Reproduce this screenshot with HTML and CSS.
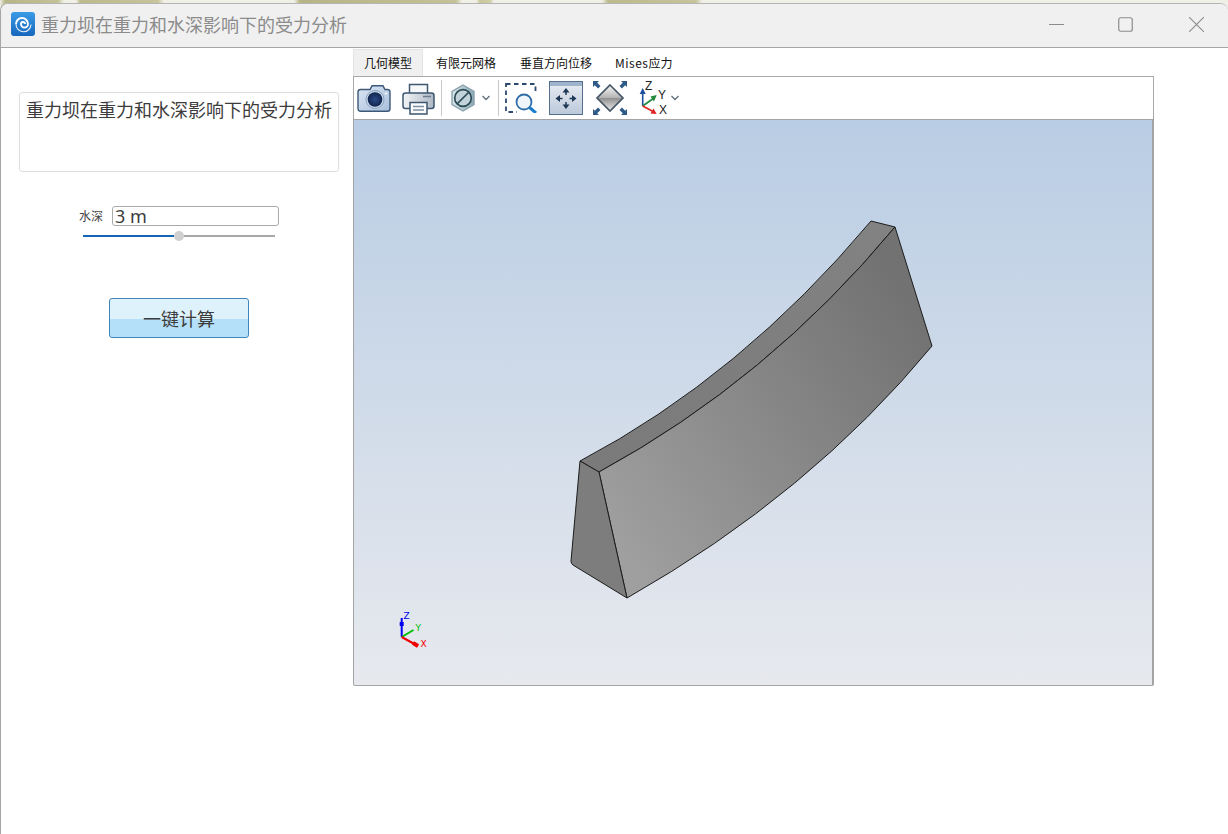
FILE: index.html
```html
<!DOCTYPE html>
<html lang="zh">
<head>
<meta charset="utf-8">
<title>重力坝在重力和水深影响下的受力分析</title>
<link rel="stylesheet" href="styles.css">
</head>
<body>
<div class="window">
  <header class="titlebar">
    <svg class="app-icon" viewBox="0 0 24 24">
      <defs><linearGradient id="ai" x1="0" y1="0" x2="0" y2="1"><stop offset="0" stop-color="#3a9be6"/><stop offset="1" stop-color="#1766bd"/></linearGradient></defs>
      <rect width="24" height="24" rx="3" fill="url(#ai)"/>
      <path d="M14 12A2 2 0 0 0 10 12A3.500 3.500 0 0 0 17 12A6 6 0 0 0 5 12" stroke="#fff" stroke-width="1.900" fill="none"/>
      <path d="M5 12A7.500 7.500 0 0 0 20 12.500" stroke="#fff" stroke-width="1.100" fill="none" opacity=".9"/>
    </svg>
    <span class="window-title">重力坝在重力和水深影响下的受力分析</span>
    <div class="controls">
      <svg class="ctl ctl-min" viewBox="0 0 15 15"><path d="M0 7.500H15" stroke="#8c8c8c" stroke-width="1" fill="none"/></svg>
      <svg class="ctl ctl-max" viewBox="0 0 15 15"><rect x=".75" y=".75" width="13.500" height="13.500" rx="2" stroke="#8c8c8c" stroke-width="1.200" fill="none"/></svg>
      <svg class="ctl ctl-close" viewBox="0 0 15 15"><path d="M0 0L15 15M15 0L0 15" stroke="#8c8c8c" stroke-width="1.100" fill="none"/></svg>
    </div>
  </header>
  <main class="content">
    <aside class="side">
      <div class="heading-box">重力坝在重力和水深影响下的受力分析</div>
      <div class="field">
        <span class="field-label">水深</span>
        <div class="field-input">3 m</div>
      </div>
      <div class="slider">
        <div class="slider-fill"></div>
        <div class="slider-thumb"></div>
        <div class="slider-rest"></div>
      </div>
      <div class="calc-btn"><span>一键计算</span></div>
    </aside>
    <section class="viewer">
      <nav class="tabs">
        <span class="tab tab-active">几何模型</span>
        <span class="tab">有限元网格</span>
        <span class="tab">垂直方向位移</span>
        <span class="tab tab-last"><span class="latin">Mises</span>应力</span>
      </nav>
      <div class="toolbar">
        <svg class="tool t-camera" viewBox="0 0 34 30">
          <defs>
            <linearGradient id="cb" x1="0" y1="0" x2="1" y2="1"><stop offset="0" stop-color="#dbe6f3"/><stop offset="1" stop-color="#a9c0dc"/></linearGradient>
            <radialGradient id="cl"><stop offset="0" stop-color="#2a4a86"/><stop offset="1" stop-color="#12264e"/></radialGradient>
          </defs>
          <path d="M3.500 6.500H13L15 2.800H26L28 6.500H30.500C32 6.500 33 7.500 33 9V25.500C33 27 32 28.300 30.500 28.300H3.500C2 28.300 1 27 1 25.500V9C1 7.500 2 6.500 3.500 6.500Z" fill="url(#cb)" stroke="#3d5878" stroke-width="1.400"/>
          <circle cx="18" cy="16.500" r="9" fill="#c8d7e8" stroke="#8aa3bf" stroke-width="1"/>
          <circle cx="18" cy="16.500" r="7.300" fill="url(#cl)"/>
          <circle cx="29" cy="10.500" r="1" fill="#fff"/>
        </svg>
        <svg class="tool t-print" viewBox="0 0 33 33">
          <defs><linearGradient id="pb" x1="0" y1="0" x2="1" y2="0"><stop offset="0" stop-color="#f2f4f6"/><stop offset="1" stop-color="#aeb8c4"/></linearGradient></defs>
          <path d="M7.500 12V2.500H25.500V12" fill="#f6f8fa" stroke="#3e566f" stroke-width="1.500"/>
          <path d="M3.500 11H29.500C31 11 32 12 32 13.500V24C32 25.500 31 26.500 29.500 26.500H3.500C2 26.500 1 25.500 1 24V13.500C1 12 2 11 3.500 11Z" fill="url(#pb)" stroke="#3e566f" stroke-width="1.500"/>
          <path d="M21 14.500H29" stroke="#6c7f92" stroke-width="1.500"/>
          <path d="M8 20.500H25V32H8Z" fill="#fafbfc" stroke="#3e566f" stroke-width="1.500"/>
          <path d="M11 24.500H22M11 28H22" stroke="#7c8fa3" stroke-width="1.300"/>
        </svg>
        <span class="sep s-one"></span>
        <svg class="tool t-hex" viewBox="0 0 24 28">
          <defs><linearGradient id="hb" x1="0" y1="0" x2="1" y2="0"><stop offset="0" stop-color="#dbe7ea"/><stop offset="1" stop-color="#8da9b3"/></linearGradient></defs>
          <path d="M12 1L23 7.500V20.500L12 27L1 20.500V7.500Z" fill="url(#hb)" stroke="#88a3ad" stroke-width="1.400"/>
          <circle cx="12" cy="14" r="8.300" fill="#c2d3d9" stroke="#2b4b57" stroke-width="1.700"/>
          <path d="M6.500 19.500L17.500 8.500" stroke="#2b4b57" stroke-width="1.700"/>
        </svg>
        <svg class="tool t-chev-a" viewBox="0 0 10 6"><path d="M1.500 1L5 4.500L8.500 1" stroke="#5f6f7d" stroke-width="1.300" fill="none"/></svg>
        <span class="sep s-two"></span>
        <svg class="tool t-zoom" viewBox="0 0 33 30">
          <rect x="1" y="1" width="29.500" height="28" fill="none" stroke="#2c4a70" stroke-width="1.800" stroke-dasharray="4.500 3.500"/>
          <rect x="12" y="11" width="21" height="19" fill="#fff"/>
          <path d="M30.500 1V12M22 29H28" stroke="#fff" stroke-width="0"/>
          <circle cx="19" cy="19" r="7.500" fill="#eef5fb" stroke="#2f6ea8" stroke-width="1.800"/>
          <path d="M24.500 24.500L31 30" stroke="#1a7ccc" stroke-width="3"/>
        </svg>
        <svg class="tool t-pan" viewBox="0 0 34 34">
          <defs><linearGradient id="pn" x1="0" y1="0" x2="0" y2="1"><stop offset="0" stop-color="#e9edf3"/><stop offset="1" stop-color="#bcc9da"/></linearGradient></defs>
          <rect x=".5" y=".5" width="33" height="33" fill="url(#pn)" stroke="#55708f"/>
          <rect x="1" y="1" width="32" height="4" fill="#9fb3cb"/>
          <path d="M17 9.500V14M17 21V25.500M9 17.500H13.500M20.500 17.500H25" stroke="#1f3856" stroke-width="1.500"/>
          <path d="M17 7L13.500 11.500H20.500ZM17 28L13.500 23.500H20.500ZM6.500 17.500L11 14V21ZM27.500 17.500L23 14V21Z" fill="#1f3856"/>
        </svg>
        <svg class="tool t-fit" viewBox="0 0 34 34">
          <defs>
            <linearGradient id="ft" x1="0" y1="0" x2="0" y2="1"><stop offset="0" stop-color="#f8f8f8"/><stop offset="1" stop-color="#b2b2b2"/></linearGradient>
            <linearGradient id="fb" x1="0" y1="0" x2="0" y2="1"><stop offset="0" stop-color="#8e8e8e"/><stop offset="1" stop-color="#eeeeee"/></linearGradient>
          </defs>
          <path d="M17 4L30 17H4Z" fill="url(#ft)"/>
          <path d="M4 17H30L17 30Z" fill="url(#fb)"/>
          <path d="M17 4L30 17L17 30L4 17Z" fill="none" stroke="#445668" stroke-width="1.700"/>
          <path d="M0 0H6L4.200 1.800L7.500 5.100L5.100 7.500L1.800 4.200L0 6ZM34 0H28L29.800 1.800L26.500 5.100L28.900 7.500L32.200 4.200L34 6ZM0 34H6L4.200 32.200L7.500 28.900L5.100 26.500L1.800 29.800L0 28ZM34 34H28L29.800 32.200L26.500 28.900L28.900 26.500L32.200 29.800L34 28Z" fill="#2f5a88"/>
        </svg>
        <svg class="tool t-axes" viewBox="0 0 28 32">
          <path d="M2.700 24V9" stroke="#1d4f9e" stroke-width="1.600"/>
          <path d="M2.700 6L-.3 12H5.700Z" fill="#1d4f9e"/>
          <path d="M2.700 24L14 16" stroke="#1f8a3c" stroke-width="1.600"/>
          <path d="M16.700 13L10.500 14.500L14 19.500Z" fill="#1f8a3c"/>
          <path d="M2.700 24L14 30" stroke="#e02020" stroke-width="1.600"/>
          <path d="M16.700 32L10.500 31.500L13.500 26.500Z" fill="#e02020"/>
          <text x="5" y="8" class="axis-text">Z</text>
          <text x="18" y="17" class="axis-text">Y</text>
          <text x="19" y="32" class="axis-text">X</text>
        </svg>
        <svg class="tool t-chev-b" viewBox="0 0 10 6"><path d="M1.500 1L5 4.500L8.500 1" stroke="#5f6f7d" stroke-width="1.300" fill="none"/></svg>
      </div>
      <div class="canvas">
        <svg class="scene" viewBox="354 120 798 565">
          <defs>
            <linearGradient id="front" gradientUnits="userSpaceOnUse" x1="600" y1="520" x2="910" y2="300"><stop offset="0" stop-color="#9f9f9f"/><stop offset="1" stop-color="#727272"/></linearGradient>
            <linearGradient id="top" gradientUnits="userSpaceOnUse" x1="590" y1="470" x2="880" y2="225"><stop offset="0" stop-color="#7a7a7a"/><stop offset="1" stop-color="#828282"/></linearGradient>
          </defs>
          <g stroke="#1c1c1c" stroke-width="1" stroke-linejoin="round">
            <path d="M580 461Q741 376 871 221L895 227Q768 380 599 472Z" fill="url(#top)"/>
            <path d="M599 472Q768 380 895 227L932 346Q810 494 627 598Z" fill="url(#front)"/>
            <path d="M580 461L599 472L627 598L573 565Q571 564 571 561Z" fill="#7d7d7d"/>
          </g>
          <g class="triad">
            <path d="M401.700 637V618" stroke="#0000f0" stroke-width="2"/>
            <path d="M401.700 626V622" stroke="#0000f0" stroke-width="4"/>
            <path d="M401.700 637L413.500 630" stroke="#00c000" stroke-width="2"/>
            <path d="M401.700 637L418 646" stroke="#f00000" stroke-width="2"/>
            <path d="M413 643L418 646" stroke="#f00000" stroke-width="4"/>
            <text x="403.500" y="618.500" class="tri-text tri-z">Z</text>
            <text x="415.500" y="631" class="tri-text tri-y">Y</text>
            <text x="420.500" y="647" class="tri-text tri-x">X</text>
          </g>
        </svg>
      </div>
    </section>
  </main>
</div>
</body>
</html>
```

FILE: styles.css
```css
* { box-sizing: border-box; }
html, body { margin: 0; height: 100%; }
body {
  width: 1228px;
  height: 834px;
  overflow: hidden;
  background: linear-gradient(90deg,
    #f0efe6 0, #b7b688 5px, #c4c296 58px, #f1f0e8 64px, #f1f0e8 76px,
    #bcbb8c 80px, #c6c49a 158px, #f1f0e8 164px, #f1f0e8 294px,
    #b5b585 300px, #c4c296 456px, #f1f0e8 462px, #f1f0e8 476px,
    #c9c79c 480px, #cfcda4 490px, #f1f0e8 494px, #f1f0e8 602px,
    #bcbb8c 608px, #c6c49a 696px, #f1f0e8 702px, #f1f0e8 100%);
  font-family: "Noto Sans CJK SC", "Noto Sans", sans-serif;
}
.window {
  height: 831px;
  margin-top: 3px;
  background: #fff;
  border-top: 1px solid #b4b4b4;
  border-left: 1px solid #a6a6a6;
  border-radius: 8px 8px 0 0;
  display: flex;
  flex-direction: column;
  overflow: hidden;
}
.titlebar {
  height: 44px;
  flex: none;
  background: #f0f0f0;
  border-bottom: 1px solid #a6a6a6;
  display: flex;
  align-items: center;
  padding: 0 0 3px 10px;
}
.app-icon { width: 24px; height: 24px; flex: none; }
.window-title {
  margin-left: 6px;
  font-size: 18px;
  line-height: 24px;
  color: #8b8b8b;
  white-space: nowrap;
}
.controls { margin-left: auto; display: flex; align-items: center; padding-right: 24px; }
.ctl { width: 15px; height: 15px; display: block; }
.ctl-max { margin-left: 54px; }
.ctl-close { margin-left: 56px; }
.content { flex: 1; display: flex; min-height: 0; }
.side {
  width: 352px;
  flex: none;
  display: flex;
  flex-direction: column;
  align-items: flex-start;
  padding: 44px 0 0 18px;
}
.heading-box {
  width: 320px;
  height: 80px;
  border: 1px solid #dedede;
  border-radius: 3px;
  padding: 4px 0 0 6px;
  font-size: 18px;
  line-height: 25px;
  color: #3c3c3c;
  white-space: nowrap;
}
.field { display: flex; align-items: center; margin: 34px 0 0 60px; }
.field-label { width: 33px; font-size: 12px; line-height: 20px; color: #444; }
.field-input {
  width: 167px;
  height: 20px;
  border: 1px solid #aaa;
  border-radius: 3px;
  padding-left: 2px;
  font-family: "Noto Sans", sans-serif;
  font-size: 18px;
  line-height: 18px;
  color: #3c3c3c;
}
.slider { display: flex; align-items: center; width: 192px; height: 10px; margin: 5px 0 0 64px; }
.slider-fill { width: 91px; height: 2px; background: #1565b4; }
.slider-thumb { width: 10px; height: 10px; border-radius: 50%; background: #cfcfcf; flex: none; }
.slider-rest { flex: 1; height: 2px; background: #a8a8a8; }
.calc-btn {
  width: 140px;
  height: 40px;
  margin: 57px 0 0 90px;
  border: 1px solid #3f84bb;
  border-radius: 3px;
  padding-bottom: 1px;
  background: linear-gradient(180deg, #def2fc 0, #def2fc 20px, #b5e0fa 20px, #b5e0fa 100%);
  display: flex;
  align-items: center;
  justify-content: center;
  font-size: 18px;
  color: #3c3c3c;
}
.viewer { width: 801px; flex: none; padding-top: 1px; display: flex; flex-direction: column; align-items: stretch; }
.tabs { display: flex; height: 27px; flex: none; }
.tab {
  font-size: 12px;
  line-height: 27px;
  padding: 0 12px;
  color: #111;
  white-space: nowrap;
}
.tab-active { width: 70px; padding: 0 10px; margin-right: 1px; background: #f0f0f0; border: 1px solid #e4e4e4; border-bottom: 0; line-height: 26px; }
.tab-last { padding-left: 11px; }
.latin { letter-spacing: .5px; }
.toolbar {
  height: 43px;
  flex: none;
  border: 1px solid #a8a8a8;
  border-bottom: 0;
  display: flex;
  align-items: center;
  padding-left: 3px;
}
.tool { display: block; flex: none; }
.t-camera { width: 34px; height: 30px; }
.t-print { width: 33px; height: 33px; margin-left: 11px; }
.sep { width: 1px; height: 36px; background: #c8c8c8; flex: none; }
.s-one { margin-left: 6px; }
.t-hex { width: 24px; height: 28px; margin-left: 9px; }
.t-chev-a { width: 10px; height: 6px; margin-left: 6px; }
.s-two { margin-left: 7px; }
.t-zoom { width: 33px; height: 30px; margin-left: 6px; }
.t-pan { width: 34px; height: 34px; margin-left: 11px; }
.t-fit { width: 34px; height: 34px; margin-left: 10px; }
.t-axes { width: 28px; height: 32px; margin-left: 13px; overflow: visible; }
.t-chev-b { width: 10px; height: 6px; margin-left: 2px; }
.axis-text { font-family: "Liberation Sans", sans-serif; font-size: 12px; fill: #222; }
.canvas {
  height: 567px;
  flex: none;
  border: 1px solid #a4a4a4;
  border-right-width: 2px;
  border-bottom-width: 1px;
  border-radius: 0 0 2px 2px;
  background: linear-gradient(180deg, #b9cde4 0%, #e7e9ee 100%);
}
.scene { display: block; width: 798px; height: 565px; }
.tri-text { font-family: "DejaVu Sans", sans-serif; font-size: 9px; }
.tri-z { fill: #0000f0; }
.tri-y { fill: #00c000; }
.tri-x { fill: #f00000; }
```
